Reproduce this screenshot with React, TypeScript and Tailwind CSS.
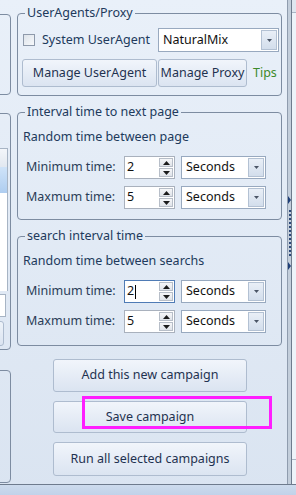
function Caret({ up }: { up?: boolean }) {
  return (
    <svg width="7" height="4" viewBox="0 0 7 4" className="block">
      <path d={up ? "M0 4 L3.5 0 L7 4 Z" : "M0 0 L7 0 L3.5 4 Z"} fill="#1b1b1b" />
    </svg>
  );
}

function ComboArrow() {
  return (
    <div className="flex h-full w-[16px] items-center justify-center border border-[#b3c1d3] bg-gradient-to-b from-[#e9eff7] to-[#d3deec]">
      <svg width="5" height="3" viewBox="0 0 5 3">
        <path d="M0 0 L5 0 L2.5 3 Z" fill="#4a5566" />
      </svg>
    </div>
  );
}

function Combo({ value, width }: { value: string; width: string }) {
  return (
    <div className={`flex h-full items-center border border-[#98a9bf] bg-white p-[1px] pl-[4px] ${width}`}>
      <span className="flex-1 text-[12.5px] text-[#111]">{value}</span>
      <ComboArrow />
    </div>
  );
}

function Spin({ value, focused }: { value: string; focused?: boolean }) {
  return (
    <div
      className={`flex h-full w-[51px] items-center bg-white pl-[2px] pr-[1px] ${
        focused ? "border-[1.5px] border-[#4f7bb5]" : "border border-[#a9b1bd]"
      }`}
    >
      <span className="flex flex-1 items-center text-[12.5px] text-[#111]">
        {value}
        {focused && <span className="ml-[1px] inline-block h-[14px] w-px bg-black" />}
      </span>
      <div className="flex w-[14px] flex-col gap-[1px]">
        <div className="flex h-[9px] items-center justify-center border border-[#b7bec8] bg-gradient-to-b from-[#f6f7f9] to-[#dfe3e9]">
          <Caret up />
        </div>
        <div className="flex h-[9px] items-center justify-center border border-[#b7bec8] bg-gradient-to-b from-[#f6f7f9] to-[#dfe3e9]">
          <Caret />
        </div>
      </div>
    </div>
  );
}

function TimeRow({ label, value, focused, mt }: { label: string; value: string; focused?: boolean; mt: string }) {
  return (
    <div className={`flex h-[23px] items-center ${mt}`}>
      <span className="ml-[8px] w-[98px] text-[12.5px] text-[#2a3c57]">{label}</span>
      <Spin value={value} focused={focused} />
      <div className="ml-[6px] h-full">
        <Combo value="Seconds" width="w-[85px]" />
      </div>
    </div>
  );
}

function Btn({ children, className }: { children: React.ReactNode; className: string }) {
  return (
    <button
      type="button"
      className={`whitespace-nowrap rounded-[3px] border border-[#aebccf] bg-gradient-to-b from-[#f1f5fb] to-[#dbe4f1] px-0 text-[12.5px] text-[#1f3250] ${className}`}
    >
      {children}
    </button>
  );
}

function IntervalGroup({ title, caption, focusFirst, last }: { title: string; caption: string; focusFirst?: boolean; last?: boolean }) {
  return (
    <fieldset className={`mt-[8px] rounded-[4px] border border-[#7d8ca1] p-0 ${last ? "pb-[12px]" : "pb-[10px]"}`}>
      <legend className="ml-[7px] px-[2px] text-[12.5px] leading-[16px] text-[#213a5c]">{title}</legend>
      <div className="ml-[5px] mt-[9px] text-[12.5px] leading-[16px] text-[#213a5c]">{caption}</div>
      <TimeRow label="Minimum time:" value="2" focused={focusFirst} mt="mt-[11px]" />
      <TimeRow label="Maxmum time:" value="5" mt="mt-[7px]" />
    </fieldset>
  );
}

function LeftStrip() {
  return (
    <div className="flex w-[11px] flex-col overflow-hidden">
      <div className="ml-[-20px] mt-[14px] h-[81px] w-[31px] shrink-0 rounded-[4px] border border-[#7d8ca1]" />
      <div className="ml-[-20px] mt-[18px] flex h-[237px] w-[31px] shrink-0 flex-col rounded-[4px] border border-[#7d8ca1]">
        <div className="mt-[34px] flex h-[143px] w-[27px] flex-col border-r border-t border-[#a7b4c4] bg-white">
          <div className="h-[18px] bg-gradient-to-b from-[#f3f6fa] to-[#e2e8f0]" />
          <div className="h-[26px] bg-gradient-to-b from-[#cfe3f8] to-[#aecdf0]" />
        </div>
        <div className="mt-[3px] h-[23px] w-[25px] border border-[#a7b4c4] bg-white" />
        <div className="mt-[4px] h-[25px] w-[23px] rounded-[3px] border border-[#aebccf] bg-gradient-to-b from-[#eef3f9] to-[#dbe4f1]" />
      </div>
      <div className="ml-[-20px] mt-[20px] h-[113px] w-[31px] shrink-0 rounded-[4px] border border-[#7d8ca1]" />
    </div>
  );
}

function Splitter() {
  return (
    <div className="ml-[5px] flex w-[4px] flex-col items-center border-l border-[#8f9cae] bg-[#c3cedb]">
      <div className="mt-[196px] h-0 w-0 border-y-[4px] border-l-[3px] border-y-transparent border-l-[#1f3f78]" />
      <div className="mt-[6px] flex flex-col gap-[2px]">
        {Array.from({ length: 12 }).map((_, i) => (
          <div key={i} className="h-[2px] w-[2px] bg-[#2c4878]" />
        ))}
      </div>
      <div className="mt-[6px] h-0 w-0 border-y-[4px] border-l-[3px] border-y-transparent border-l-[#1f3f78]" />
    </div>
  );
}

export default function App() {
  return (
    <div className="relative flex h-[495px] w-[296px] flex-col overflow-hidden bg-gradient-to-b from-[#e9f0f9] to-[#dae4f1] font-['Noto_Sans',sans-serif] text-[12.5px] text-[#213a5c]">
      <div className="flex h-[485px] border-b border-[#6e7b8d]">
        <LeftStrip />

        <div className="ml-[6px] flex w-[265px] flex-col pt-[5px]">
          <fieldset className="rounded-[4px] border border-[#7d8ca1] p-0 pb-[8px]">
            <legend className="ml-[7px] px-[2px] text-[12.5px] leading-[16px] text-[#213a5c]">UserAgents/Proxy</legend>
            <div className="mt-[7px] flex h-[24px] items-center">
              <div className="ml-[5px] h-[12px] w-[12px] border border-[#8e9aab] bg-gradient-to-br from-[#dde3ea] to-[#f7f9fb]" />
              <span className="ml-[7px] w-[116px] text-[#213a5c]">System UserAgent</span>
              <Combo value="NaturalMix" width="w-[121px]" />
            </div>
            <div className="mt-[7px] flex h-[28px] items-center">
              <Btn className="ml-[4px] h-full w-[135px]">Manage UserAgent</Btn>
              <Btn className="ml-[1px] h-full w-[89px]">Manage Proxy</Btn>
              <span className="ml-[6px] text-[#3d8a2a]">Tips</span>
            </div>
          </fieldset>

          <IntervalGroup title="Interval time to next page" caption="Random time between page" />
          <IntervalGroup title="search interval time" caption="Random time between searchs" focusFirst last />

          <Btn className="ml-[36px] mt-[13px] h-[33px] w-[194px]">Add this new campaign</Btn>
          <Btn className="ml-[36px] mt-[9px] h-[32px] w-[194px]">Save campaign</Btn>
          <Btn className="ml-[36px] mt-[9px] h-[34px] w-[194px]">Run all selected campaigns</Btn>
        </div>

        <Splitter />

        <div className="flex w-[5px] flex-col border-l border-[#6e7b8d] bg-[#eef3f9]">
          <div className="h-[13px] border-b border-[#a9b5c4] bg-[#dfe6ef]" />
          <div className="flex-1" />
          <div className="h-[25px] border-t border-[#a9b5c4]" />
        </div>
      </div>
      <div className="flex-1 bg-gradient-to-b from-[#cddbed] to-[#c1d2e9]" />

      <div className="absolute left-[82px] top-[396px] h-[33px] w-[190px] border-[3px] border-[#ff1eff]" />
    </div>
  );
}
